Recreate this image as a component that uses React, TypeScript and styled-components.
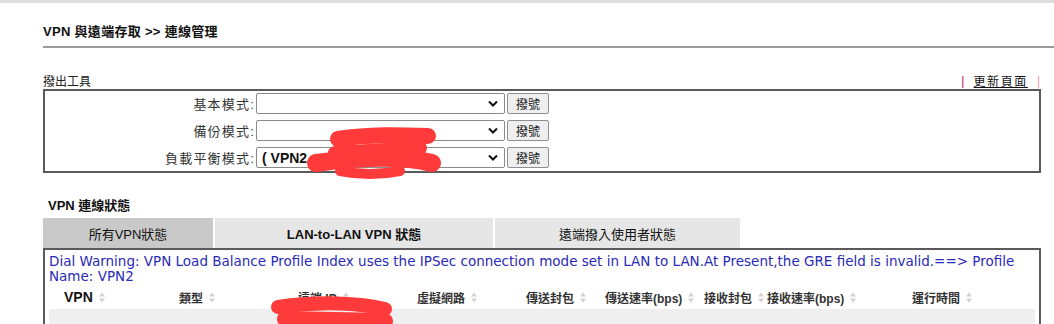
import React, { FC } from "react";
import styled, { createGlobalStyle } from "styled-components";

const GlobalStyle = createGlobalStyle`
  html, body {
    margin: 0;
    padding: 0;
    background: #fff;
  }
  body {
    font-family: "Liberation Sans", "Noto Sans CJK TC", sans-serif;
    color: #222;
  }
`;

const CJK = `"Liberation Sans", "Noto Sans CJK TC", sans-serif`;

const StyledPage = styled.div`
  position: relative;
  width: 1054px;
  height: 324px;
  overflow: hidden;
  border-top: 3px solid #dedede;
  box-sizing: border-box;
`;

const StyledContent = styled.div`
  padding: 0 13px 0 43px;
`;

const StyledTitle = styled.h1`
  margin: 0 -13px 0 0;
  padding: 18px 0 6px;
  font-family: ${CJK};
  font-size: 13px;
  letter-spacing: 0.3px;
  font-weight: 700;
  color: #111;
  border-bottom: 2px solid #9a9a9a;
`;

const StyledSectionHead = styled.div`
  display: flex;
  justify-content: space-between;
  align-items: flex-end;
  margin-top: 24px;
  height: 17px;
  font-size: 12px;
  color: #222;
`;

const StyledRefresh = styled.div`
  display: flex;
  align-items: center;
  gap: 9px;
  padding-right: 1px;
  font-size: 12px;
`;

const StyledPipe = styled.span<{ $light?: boolean }>`
  color: ${({ $light }) => ($light ? "#f09aa6" : "#c0104a")};
`;

const StyledLink = styled.a`
  color: #111;
  text-decoration: underline;
  letter-spacing: 1.6px;
`;

const StyledDialBox = styled.div`
  border: 2px solid #5a5a5a;
  padding: 2px 0 3px;
  display: flex;
  flex-direction: column;
  gap: 6px;
`;

const StyledDialRow = styled.div`
  display: flex;
  align-items: center;
  height: 21px;
`;

const StyledLabel = styled.span`
  width: 211px;
  text-align: right;
  font-size: 13px;
  letter-spacing: 1.2px;
  color: #333;
  padding-right: 1px;
  box-sizing: border-box;
`;

const StyledSelect = styled.div`
  width: 249px;
  height: 21px;
  box-sizing: border-box;
  border: 1px solid #8a8a8a;
  border-radius: 2px;
  display: flex;
  align-items: center;
  justify-content: space-between;
  padding: 0 6px 0 5px;
  background: #fff;
`;

const StyledSelectValue = styled.span`
  font-family: "Liberation Sans", Arial, sans-serif;
  font-size: 14px;
  font-weight: 700;
  color: #111;
`;

const StyledButton = styled.button`
  margin-left: 2px;
  width: 42px;
  height: 21px;
  padding: 0;
  background: #efefef;
  border: 1px solid #8f8f8f;
  border-radius: 2px;
  font-family: ${CJK};
  font-size: 12px;
  color: #222;
`;

const StyledStatusHead = styled.div`
  margin-top: 22px;
  padding-left: 5px;
  font-size: 13px;
  font-weight: 700;
  color: #111;
`;

const StyledTabs = styled.div`
  display: flex;
  gap: 2px;
  margin-top: 4px;
`;

const StyledTab = styled.div<{ $w: number; $active?: boolean; $bold?: boolean }>`
  width: ${({ $w }) => $w}px;
  height: 30px;
  display: flex;
  align-items: center;
  justify-content: center;
  background: ${({ $active }) => ($active ? "#c9c9c9" : "#e6e6e6")};
  font-size: 13px;
  font-weight: ${({ $bold }) => ($bold ? 700 : 400)};
  color: #111;
`;

const StyledStatusBox = styled.div`
  border: 2px solid #5a5a5a;
  border-bottom: 0;
  height: 80px;
  padding: 4px 2px 0 4px;
`;

const StyledWarning = styled.p`
  margin: 0;
  font-family: "DejaVu Sans", "Noto Sans CJK TC", sans-serif;
  font-size: 13.5px;
  line-height: 15px;
  color: #2a2ab8;
`;

const StyledHeaderRow = styled.div`
  display: flex;
  align-items: center;
  height: 24px;
  margin-top: 1px;
  padding-left: 15px;
`;

const StyledHeaderCell = styled.div<{ $w?: number; $bold?: boolean }>`
  ${({ $w }) => ($w ? `width: ${$w}px;` : "flex: 1;")}
  display: flex;
  align-items: center;
  gap: 6px;
  white-space: nowrap;
  font-family: "Liberation Sans", "Noto Sans CJK TC", sans-serif;
  font-size: ${({ $bold }) => ($bold ? 14 : 12)}px;
  font-weight: 700;
  color: ${({ $bold }) => ($bold ? "#111" : "#333")};
`;

const StyledDataRow = styled.div`
  height: 20px;
  background: #efefef;
  margin-right: 2px;
`;

const StyledScribble = styled.svg`
  position: absolute;
  left: 0;
  top: 0;
  pointer-events: none;
`;

const Chevron: FC = () => (
  <svg width="10" height="7" viewBox="0 0 10 7">
    <path d="M1 1.5 L5 5.5 L9 1.5" fill="none" stroke="#111" strokeWidth="2" />
  </svg>
);

const SortIcon: FC = () => (
  <svg width="6" height="11" viewBox="0 0 6 11">
    <path d="M0 4.5 L3 0.5 L6 4.5 Z" fill="#d2d2d2" />
    <path d="M0 6.5 L3 10.5 L6 6.5 Z" fill="#d2d2d2" />
  </svg>
);

const dialModes = [
  { label: "基本模式:", value: "" },
  { label: "備份模式:", value: "" },
  { label: "負載平衡模式:", value: "( VPN2" },
];

const columns = [
  { title: "VPN", w: 115, bold: true },
  { title: "類型", w: 119 },
  { title: "遠端 IP", w: 119 },
  { title: "虛擬網路", w: 109 },
  { title: "傳送封包", w: 79 },
  { title: "傳送速率(bps)", w: 99 },
  { title: "接收封包", w: 63 },
  { title: "接收速率(bps)", w: 145 },
  { title: "運行時間" },
];

const App: FC = () => (
  <StyledPage>
    <GlobalStyle />
    <StyledContent>
      <StyledTitle>VPN 與遠端存取 &gt;&gt; 連線管理</StyledTitle>

      <StyledSectionHead>
        <span>撥出工具</span>
        <StyledRefresh>
          <StyledPipe>|</StyledPipe>
          <StyledLink href="#">更新頁面</StyledLink>
          <StyledPipe $light>|</StyledPipe>
        </StyledRefresh>
      </StyledSectionHead>

      <StyledDialBox>
        {dialModes.map((m) => (
          <StyledDialRow key={m.label}>
            <StyledLabel>{m.label}</StyledLabel>
            <StyledSelect>
              <StyledSelectValue>{m.value}</StyledSelectValue>
              <Chevron />
            </StyledSelect>
            <StyledButton>撥號</StyledButton>
          </StyledDialRow>
        ))}
      </StyledDialBox>

      <StyledStatusHead>VPN 連線狀態</StyledStatusHead>
      <StyledTabs>
        <StyledTab $w={170} $active>所有VPN狀態</StyledTab>
        <StyledTab $w={278} $bold>LAN-to-LAN VPN 狀態</StyledTab>
        <StyledTab $w={245}>遠端撥入使用者狀態</StyledTab>
      </StyledTabs>

      <StyledStatusBox>
        <StyledWarning>
          Dial Warning: VPN Load Balance Profile Index uses the IPSec connection mode set in LAN
          to LAN.At Present,the GRE field is invalid.==&gt; Profile Name: VPN2
        </StyledWarning>
        <StyledHeaderRow>
          {columns.map((c) => (
            <StyledHeaderCell key={c.title} $w={c.w} $bold={c.bold}>
              {c.title}
              <SortIcon />
            </StyledHeaderCell>
          ))}
        </StyledHeaderRow>
        <StyledDataRow />
      </StyledStatusBox>
    </StyledContent>

    {/* redaction marks drawn over the page */}
    <StyledScribble width="1054" height="324" viewBox="0 0 1054 324">
      <g fill="none" stroke="#ff3a3a" strokeLinecap="round" strokeLinejoin="round">
        <path d="M338 136 C370 131 400 132 428 133" strokeWidth="16" />
        <path d="M316 160 C360 154 400 152 432 160" strokeWidth="18" />
        <path d="M335 150 L420 145" strokeWidth="14" />
        <path d="M340 168 C360 172 380 172 400 168" strokeWidth="10" />
        <path d="M278 304 C320 298 360 300 385 306" strokeWidth="14" />
        <path d="M285 316 L385 318" strokeWidth="16" />
      </g>
    </StyledScribble>
  </StyledPage>
);

export default App;
